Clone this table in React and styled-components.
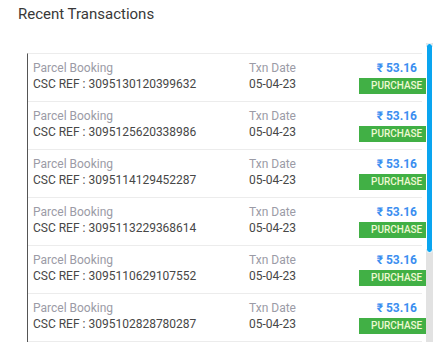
import React from 'react';
import styled, { createGlobalStyle } from 'styled-components';

const GlobalStyle = createGlobalStyle`
  html, body {
    margin: 0;
    padding: 0;
    background: #fff;
    overflow: hidden;
  }
  body {
    font-family: Roboto, 'Liberation Sans', sans-serif;
  }
`;

const Page = styled.div`
  height: 100vh;
  display: flex;
  flex-direction: column;
`;

const Heading = styled.h3`
  margin: 0 0 19px 18px;
  padding-top: 4px;
  font-size: 15px;
  line-height: 20px;
  font-weight: 400;
  color: #383838;
`;

const Panel = styled.div`
  flex: 1;
  min-height: 0;
  margin-left: 27px;
  width: 406px;
  display: flex;
`;

const Scroller = styled.div`
  flex: 1;
  overflow-y: auto;
  overflow-x: hidden;
  scrollbar-width: none;

  &::-webkit-scrollbar {
    display: none;
  }
`;

const Track = styled.div`
  width: 7px;
  background: #e2e2e2;
  display: flex;
  flex-direction: column;
`;

const Thumb = styled.div`
  height: 210px;
  box-sizing: border-box;
  background: #0aa5f0;
  border: 1px solid #fff;
  border-radius: 4px;
`;

const List = styled.div`
  margin: 10px 4px 31px 0;
  border-left: 1px solid #555;
  border-top: 1px solid #ececec;
`;

const Row = styled.div`
  height: 48px;
  box-sizing: border-box;
  padding: 6px 0 0 5px;
  border-bottom: 1px solid #ececec;
  display: flex;
  font-size: 12px;
  line-height: 16px;
`;

const Col = styled.div`
  display: flex;
  flex-direction: column;
  width: ${(props) => props.width || 'auto'};
  flex: ${(props) => (props.grow ? 1 : 'none')};
  align-items: ${(props) => (props.end ? 'flex-end' : 'flex-start')};
`;

const Label = styled.span`
  color: #9b9ba6;
`;

const Value = styled.span`
  color: #474747;
`;

const Amount = styled.span`
  color: #3b8ef0;
  font-weight: 700;
  margin-right: 5px;
`;

const Badge = styled.span`
  margin-top: 2px;
  margin-right: -4px;
  width: 67px;
  height: 16px;
  box-sizing: border-box;
  padding: 0 5px 0 12px;
  background: #41b045;
  color: #eef8d2;
  font-size: 10px;
  font-weight: 500;
  line-height: 16px;
  text-align: right;
`;

const refs = [
  '3095130120399632',
  '3095125620338986',
  '3095114129452287',
  '3095113229368614',
  '3095110629107552',
  '3095102828780287',
];

const App = () => {
  return (
    <Page>
      <GlobalStyle />
      <Heading>Recent Transactions</Heading>
      <Panel>
        <Scroller>
          <List>
            {refs.map((ref) => (
              <Row key={ref}>
                <Col width="216px">
                  <Label>Parcel Booking</Label>
                  <Value>CSC REF : {ref}</Value>
                </Col>
                <Col grow>
                  <Label>Txn Date</Label>
                  <Value>05-04-23</Value>
                </Col>
                <Col end>
                  <Amount>₹ 53.16</Amount>
                  <Badge>PURCHASE</Badge>
                </Col>
              </Row>
            ))}
          </List>
        </Scroller>
        <Track>
          <Thumb />
        </Track>
      </Panel>
    </Page>
  );
};

export default App;
